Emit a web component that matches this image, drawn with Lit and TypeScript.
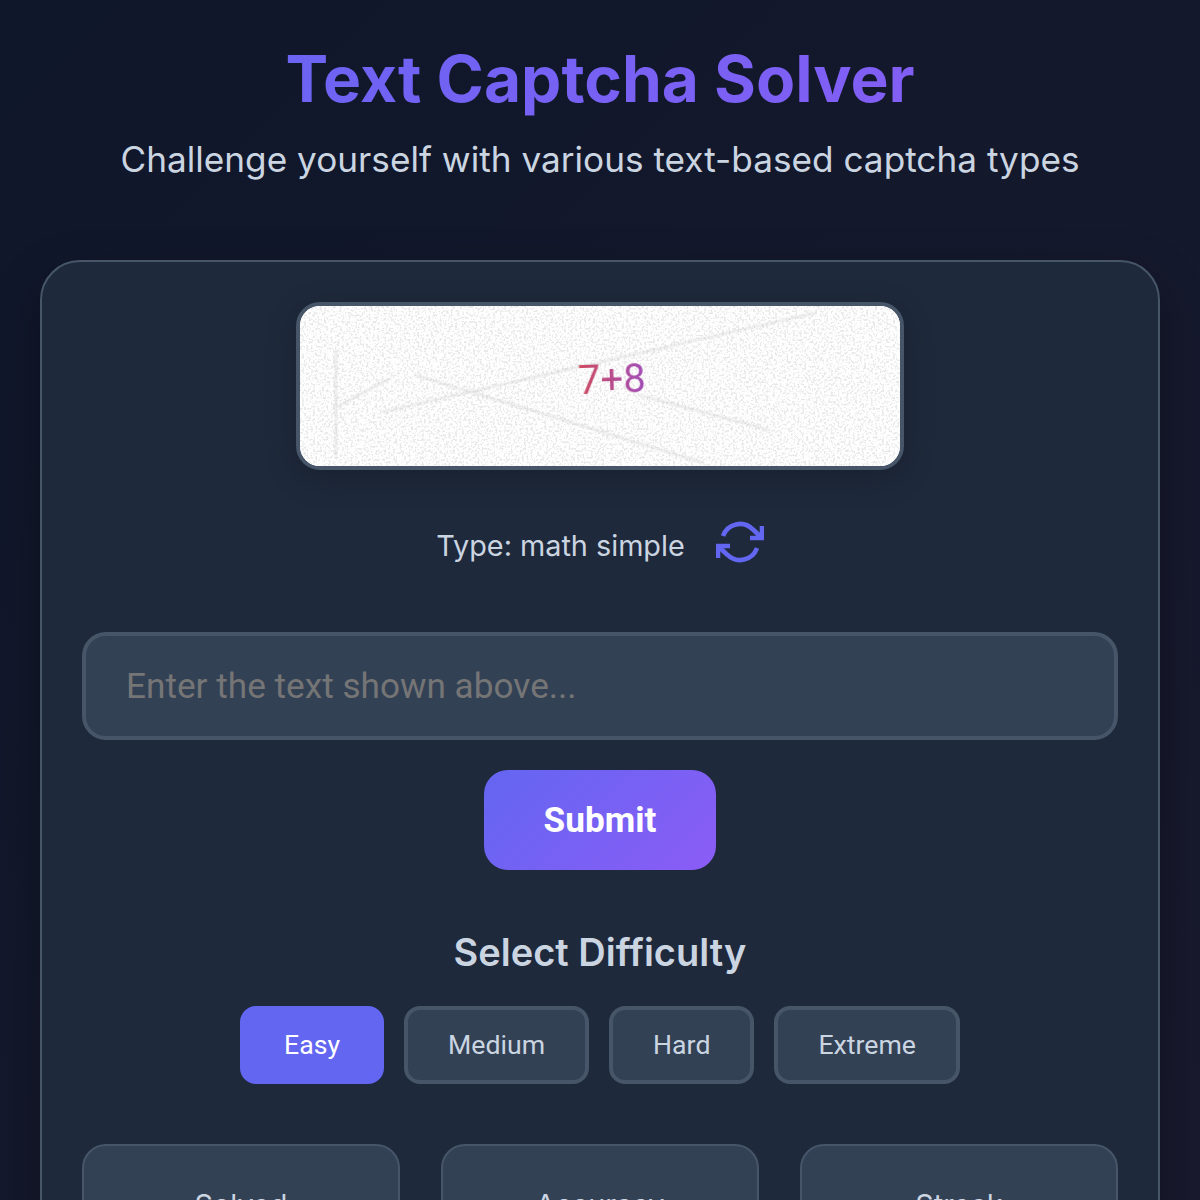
import { LitElement, html, css, svg } from "lit";
import { customElement } from "lit/decorators.js";

@customElement("app-root")
export class AppRoot extends LitElement {
  static styles = css`
    :host { display: block; }
    * { box-sizing: border-box; }
    .page {
      min-height: 1500px;
      background: linear-gradient(135deg, #0f172a 0%, #1a1a2e 100%);
      padding: 40px;
      font-family: Inter, sans-serif;
      color: #e2e8f0;
    }
    header { text-align: center; margin-bottom: 79px; }
    h1 {
      margin: 0 0 21px;
      font-size: 64px;
      line-height: 77px;
      font-weight: 700;
      background: linear-gradient(135deg, #6366f1, #8b5cf6);
      -webkit-background-clip: text;
      background-clip: text;
      color: transparent;
    }
    .subtitle { margin: 0; font-size: 35.2px; line-height: 43px; color: #cbd5e1; font-weight: 400; }
    .card {
      background: #1e293b;
      border: 2px solid #475569;
      border-radius: 40px;
      padding: 40px;
      box-shadow: 0 20px 50px rgba(0, 0, 0, 0.3);
    }
    .captcha-wrap { display: flex; justify-content: center; margin-bottom: 48px; }
    .captcha {
      position: relative;
      width: 608px;
      height: 168px;
      border: 4px solid #475569;
      border-radius: 24px;
      overflow: hidden;
      background: #fff;
      box-shadow: 0 8px 32px rgba(0, 0, 0, 0.2);
    }
    .captcha svg { display: block; width: 600px; height: 160px; }
    .code {
      position: absolute;
      left: 278px;
      top: 50px;
      font-family: Roboto, sans-serif;
      font-size: 40px;
      line-height: 48px;
      transform: rotate(-2deg);
      background: linear-gradient(90deg, #cf4a5e 0%, #a04cb8 100%);
      -webkit-background-clip: text;
      background-clip: text;
      color: transparent;
      filter: blur(0.7px);
    }
    .type-row {
      display: flex;
      justify-content: center;
      align-items: center;
      gap: 31px;
      margin-bottom: 66px;
    }
    .type { padding-top: 6px; font-size: 28.8px; line-height: 35px; color: #cbd5e1; }
    .refresh { display: block; width: 48px; height: 48px; padding: 0; border: 0; background: none; color: #6366f1; }
    .refresh svg { display: block; width: 48px; height: 48px; }
    input {
      display: block;
      width: 100%;
      height: 108px;
      padding: 0 40px;
      background: #334155;
      border: 4px solid #475569;
      border-radius: 24px;
      font-family: Roboto, sans-serif;
      font-size: 35.2px;
      color: #e2e8f0;
      outline: none;
    }
    .submit-wrap { display: flex; justify-content: center; margin-top: 30px; margin-bottom: 60px; }
    .submit {
      width: 232px;
      height: 100px;
      border: 0;
      border-radius: 24px;
      background: linear-gradient(135deg, #6366f1, #8b5cf6);
      color: #fff;
      font-family: Roboto, sans-serif;
      font-size: 35.2px;
      font-weight: 700;
    }
    h2 {
      margin: 0 0 32px;
      text-align: center;
      font-size: 38px;
      line-height: 44px;
      font-weight: 600;
      color: #cbd5e1;
    }
    .levels { display: flex; justify-content: center; gap: 20px; margin-bottom: 60px; }
    .level {
      height: 78px;
      padding: 0 40px;
      border: 4px solid #475569;
      border-radius: 16px;
      background: #334155;
      color: #cbd5e1;
      font-family: Roboto, sans-serif;
      font-size: 26.67px;
    }
    .level.active { background: #6366f1; border-color: #6366f1; color: #fff; }
    .stats { display: grid; grid-template-columns: repeat(3, 1fr); gap: 41px; }
    .stat {
      background: #334155;
      border: 2px solid #475569;
      border-radius: 24px;
      padding: 41px 40px 40px;
      text-align: center;
    }
    .stat-label { font-size: 28.8px; line-height: 35px; color: #cbd5e1; }
    .stat-value { margin-top: 8px; font-size: 48px; font-weight: 700; color: #6366f1; }
  `;

  render() {
    return html`
      <div class="page">
        <header>
          <h1>Text Captcha Solver</h1>
          <p class="subtitle">Challenge yourself with various text-based captcha types</p>
        </header>
        <main class="card">
          <div class="captcha-wrap">
            <div class="captcha">
              <svg viewBox="0 0 600 160" aria-hidden="true">
                <defs>
                  <filter id="noise" x="0" y="0" width="100%" height="100%">
                    <feTurbulence type="fractalNoise" baseFrequency="0.45" numOctaves="2" seed="4" />
                    <feColorMatrix values="0 0 0 0 0.6  0 0 0 0 0.6  0 0 0 0 0.6  6 0 0 0 -2.9" />
                    <feGaussianBlur stdDeviation="0.6" />
                  </filter>
                  <filter id="soft" x="-5%" y="-5%" width="110%" height="110%"><feGaussianBlur stdDeviation="1" /></filter>
                </defs>
                <rect width="600" height="160" fill="#fff" />
                <rect width="600" height="160" filter="url(#noise)" opacity="0.42" />
                <g stroke="#b0b0b0" stroke-width="1.6" fill="none" filter="url(#soft)" opacity="0.4">
                  ${svg`
                    <line x1="82" y1="106" x2="515" y2="7" />
                    <line x1="115" y1="69" x2="404" y2="157" />
                    <line x1="339" y1="89" x2="470" y2="124" />
                    <line x1="36" y1="44" x2="36" y2="151" />
                    <line x1="37" y1="101" x2="90" y2="72" />
                  `}
                </g>
              </svg>
              <span class="code">7+8</span>
            </div>
          </div>
          <div class="type-row">
            <span class="type">Type: math simple</span>
            <button class="refresh" aria-label="Refresh">
              <svg viewBox="0 0 24 24" fill="none" stroke="currentColor" stroke-width="2.3">
                <polyline points="23 4 23 10 17 10" />
                <polyline points="1 20 1 14 7 14" />
                <path d="M3.51 9a9 9 0 0 1 14.85-3.36L23 10M1 14l4.64 4.36A9 9 0 0 0 20.49 15" />
              </svg>
            </button>
          </div>
          <input type="text" placeholder="Enter the text shown above..." />
          <div class="submit-wrap"><button class="submit">Submit</button></div>
          <h2>Select Difficulty</h2>
          <div class="levels">
            <button class="level active">Easy</button>
            <button class="level">Medium</button>
            <button class="level">Hard</button>
            <button class="level">Extreme</button>
          </div>
          <div class="stats">
            <div class="stat"><div class="stat-label">Solved</div><div class="stat-value">0</div></div>
            <div class="stat"><div class="stat-label">Accuracy</div><div class="stat-value">0%</div></div>
            <div class="stat"><div class="stat-label">Streak</div><div class="stat-value">0</div></div>
          </div>
        </main>
      </div>
    `;
  }
}
